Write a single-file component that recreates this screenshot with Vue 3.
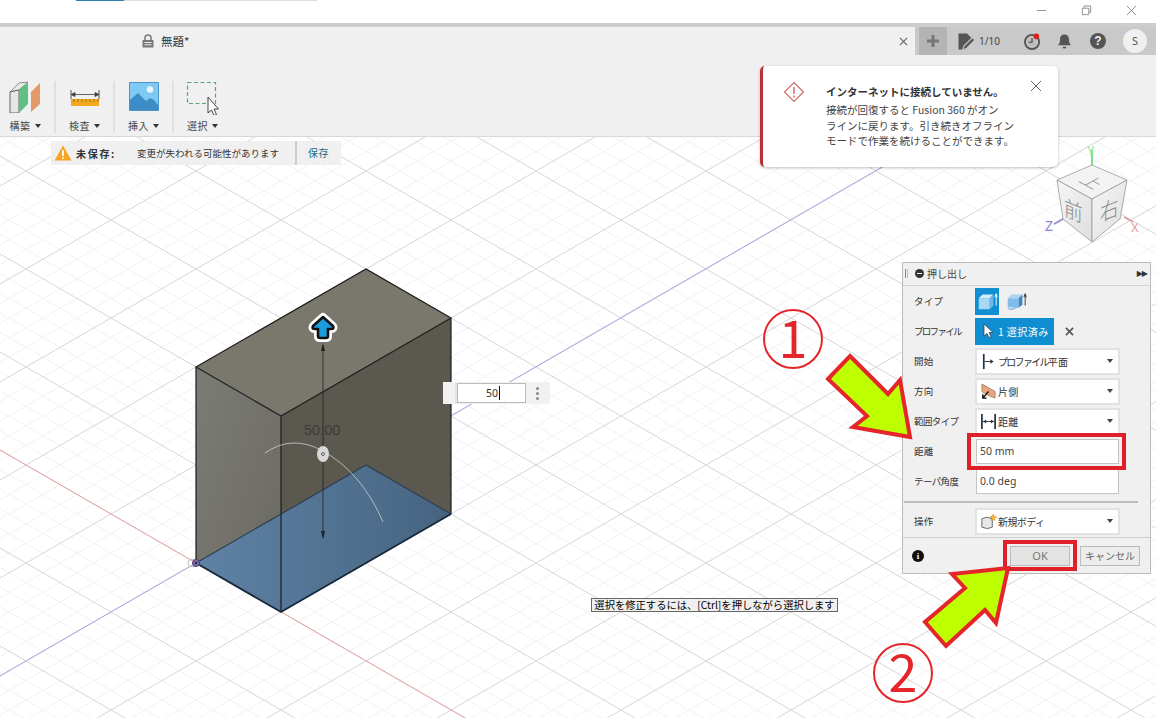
<script setup>
const S = 98 / 170
const OX = 196
const OY = 563

function family(sign) {
  const out = []
  for (let k = -90; k <= 90; k++) {
    const off = k * 19.6
    out.push({
      id: sign + '_' + k,
      major: k % 5 === 0,
      x1: 0,
      y1: OY + sign * S * (0 - OX) + off,
      x2: 1156,
      y2: OY + sign * S * (1156 - OX) + off
    })
  }
  return out
}
const lines = [...family(1), ...family(-1)]
const minorLines = lines.filter(l => !l.major)
const majorLines = lines.filter(l => l.major)

const toolGroups = [
  { id: 'build', label: '構築' },
  { id: 'inspect', label: '検査' },
  { id: 'insert', label: '挿入' },
  { id: 'select', label: '選択' }
]
</script>

<template>
  <div class="app">
    <div class="titlebar">
      <div class="sliver"><span class="sliver-blue"></span><span class="sliver-gray"></span></div>
      <div class="win-controls">
        <svg class="win-ic" viewBox="0 0 12 12"><path d="M1 6h10" stroke="#888" fill="none" /></svg>
        <svg class="win-ic" viewBox="0 0 12 12"><path d="M3.500 3V1h7v7H8.500M1.500 3.500h7v7h-7z" stroke="#888" fill="none" /></svg>
        <svg class="win-ic" viewBox="0 0 12 12"><path d="M1 1l10 10M11 1L1 11" stroke="#888" fill="none" /></svg>
      </div>
    </div>

    <div class="tabbar">
      <div class="tab">
        <svg class="lock" viewBox="0 0 12 14"><path d="M3 6V4a3 3 0 0 1 6 0v2" stroke="#777" stroke-width="1.500" fill="none" /><path d="M0.500 6h11v7.500h-11z" fill="#777" /><path d="M2.500 8.500h7M2.500 10.800h7" stroke="#f0f0f0" /></svg>
        <span class="tab-title">無題*</span>
        <svg class="tab-close" viewBox="0 0 10 10"><path d="M1 1l8 8M9 1l-8 8" stroke="#666" stroke-width="1.300" /></svg>
      </div>
      <div class="plus"><svg viewBox="0 0 14 14" class="plus-ic"><path d="M7 1v12M1 7h12" stroke="#777" stroke-width="3" /></svg></div>
      <div class="tab-tools">
        <svg class="doc-ic" viewBox="0 0 18 17"><path d="M0.500 0.500h8.500l4.500 4.500v5l-6.500 6.500h-6.500z" fill="#555" /><path d="M6 13l8.500-8.500 2.500 2.500-8.500 8.500-3.500 1z" fill="#555" stroke="#c9c9c9" stroke-width="1.100" /></svg>
        <span class="count">1/10</span>
        <svg class="clock-ic" viewBox="0 0 18 18"><circle cx="8.500" cy="9.500" r="7.500" fill="none" stroke="#555" stroke-width="2" /><circle cx="8.500" cy="9.500" r="4.800" fill="#bbb" /><path d="M8.500 5.500v4.300H4.800" fill="none" stroke="#444" stroke-width="1.200" /><circle cx="13" cy="3.500" r="3" fill="#dd2020" /></svg>
        <svg class="bell-ic" viewBox="0 0 16 18"><path d="M8 1.500c3.200 0 4.800 2.400 4.800 5.500 0 3.200 1 4.500 2.200 6H1c1.200-1.500 2.200-2.800 2.200-6C3.200 3.900 4.800 1.500 8 1.500z" fill="#555" /><path d="M6 14.500h4a2 2 0 0 1-4 0z" fill="#555" /></svg>
        <div class="help">?</div>
        <div class="avatar">S</div>
      </div>
    </div>

    <div class="toolbar">
      <div v-for="g in toolGroups" :key="g.id" class="tool-group" :class="'tg-' + g.id">
        <svg v-if="g.id === 'build'" class="tool-ic" viewBox="0 0 32 32">
          <path d="M1 11l9-9 9-1-9 8z" fill="#e8e8e8" stroke="#777" stroke-width=".8" />
          <path d="M1 11l9-2v23H1z" fill="#e6e6e6" stroke="#666" />
          <path d="M10 9l9-8v22l-9 9z" fill="#5fc084" />
          <path d="M22 31V11l9-9v21z" fill="#e3996a" />
        </svg>
        <svg v-else-if="g.id === 'inspect'" class="tool-ic" viewBox="0 0 32 32">
          <path d="M2 9v9M30 9v9" stroke="#555" fill="none" />
          <path d="M2 13.500h28M2 13.500l4-2v4zM30 13.500l-4-2v4z" stroke="#444" fill="#444" stroke-width=".8" />
          <path d="M2 18h28v7H2z" fill="#f2a91f" />
          <path d="M5 18v3M9 18v3M13 18v3M17 18v3M21 18v3M25 18v3M29 18v3" stroke="#a3701a" />
        </svg>
        <svg v-else-if="g.id === 'insert'" class="tool-ic" viewBox="0 0 32 32">
          <path d="M1.500 1.500h29v28h-29z" fill="#7fc9f5" stroke="#4b94c8" />
          <circle cx="22" cy="8.500" r="3.200" fill="#eaf6fd" />
          <path d="M2 29V19l8-7 8 8 4-3 4 2 4 5v5z" fill="#3c8dc7" />
        </svg>
        <svg v-else class="tool-ic sel-ic" viewBox="0 0 34 34">
          <path d="M2.500 1.500h28v21h-28z" fill="none" stroke="#5aa678" stroke-width="1.200" stroke-dasharray="4 2.500" />
          <path d="M23 16v16l3.500-3 2.500 5.500 2.500-1-2.500-5.500h4.500z" fill="#fff" stroke="#444" />
        </svg>
        <div class="tool-label">{{ g.label }}<span class="caret"></span></div>
      </div>
    </div>

    <div class="canvas">
      <svg class="scene" viewBox="0 137 1156 581">
        <defs>
          <linearGradient id="leftFace" x1="0" y1="0" x2="1" y2="1">
            <stop offset="0" stop-color="#7c7c77" />
            <stop offset="1" stop-color="#6a6960" />
          </linearGradient>
          <linearGradient id="floorFace" x1="0" y1="0" x2="1" y2="0">
            <stop offset="0" stop-color="#5f82a5" />
            <stop offset="1" stop-color="#466480" />
          </linearGradient>
          <linearGradient id="cubeFace" x1="0" y1="0" x2="1" y2="1">
            <stop offset="0" stop-color="#f6f6f6" />
            <stop offset="1" stop-color="#dedede" />
          </linearGradient>
        </defs>
        <line v-for="l in minorLines" :key="l.id" :x1="l.x1" :y1="l.y1" :x2="l.x2" :y2="l.y2" stroke="#f2f2f2" stroke-width="1" />
        <line v-for="l in majorLines" :key="l.id" :x1="l.x1" :y1="l.y1" :x2="l.x2" :y2="l.y2" stroke="#d6d6d6" stroke-width="1" />
        <line x1="0" y1="450" x2="500" y2="738" stroke="#e6a3a3" stroke-width="1" />
        <line x1="0" y1="676" x2="1156" y2="9" stroke="#aaa8e2" stroke-width="1" />

        <polygon points="196,367 281,416 281,612 196,563" fill="url(#leftFace)" />
        <polygon points="281,416 451,318 451,514 281,612" fill="#5b584f" />
        <polygon points="196,367 366,269 451,318 281,416" fill="#7a776c" />
        <polygon points="196,563 366,465 451,514 281,612" fill="url(#floorFace)" />
        <path d="M196 563L366 465L451 514" fill="none" stroke="#2c3f52" stroke-width="1.200" />
        <path d="M196 367L366 269L451 318L281 416L196 367V563M451 318V514M281 416V612" fill="none" stroke="#1c1c1c" stroke-width="1.200" />
        <path d="M196 563L281 612L451 514" fill="none" stroke="#16283a" stroke-width="1.800" />
        <circle cx="192" cy="563" r="4" fill="none" stroke="#bbb" />
        <circle cx="196" cy="563" r="3.500" fill="#7a6ea8" stroke="#4a3a70" />
        <circle cx="196" cy="563" r="1" fill="#111" />

        <path d="M323 345V538" stroke="#222" stroke-width=".8" />
        <path d="M323 343l-2 8h4zM323 539l-2-8h4z" fill="#222" />
        <path d="M265 453Q292 434 323 451Q362 473 383 522" fill="none" stroke="#d4d4d4" stroke-opacity=".75" stroke-width="1" />
        <ellipse cx="323" cy="454" rx="6" ry="8" fill="#d8d8d8" />
        <circle cx="323" cy="454" r="1.500" fill="none" stroke="#666" />
        <text x="304" y="435" class="dim">50.00</text>
        <path class="arrow-halo" d="M323 317L333 326Q334.500 329 331 329H328V336Q328 338 326 338H320Q318 338 318 336V329H315Q311.500 329 313 326Z" />
        <path class="arrow-core" d="M323 317L333 326Q334.500 329 331 329H328V336Q328 338 326 338H320Q318 338 318 336V329H315Q311.500 329 313 326Z" />

        <!-- view cube -->
        <path d="M1092 165V150" stroke="#7ee08c" stroke-width="2" />
        <text x="1087" y="155" class="axis ax-y">Y</text>
        <path d="M1063 219l-9 5" stroke="#8b88d8" stroke-width="1.500" />
        <text x="1045" y="231" class="axis ax-z">Z</text>
        <path d="M1124 217l9 5" stroke="#ea9a9a" stroke-width="1.500" />
        <text x="1131" y="232" class="axis ax-x">X</text>
        <polygon points="1092,165 1127,180 1092,199 1057,180" fill="#f3f3f3" stroke="#999" stroke-width=".8" />
        <polygon points="1057,180 1092,199 1092,242 1063,219" fill="url(#cubeFace)" stroke="#999" stroke-width=".8" />
        <polygon points="1127,180 1092,199 1092,242 1120,219" fill="url(#cubeFace)" stroke="#999" stroke-width=".8" />
        <text class="cube-t" transform="matrix(.72 .4 -.72 .4 1078 181)" x="0" y="0">上</text>
        <text class="cube-t" transform="matrix(.85 .35 0 1 1064 215)" x="0" y="0">前</text>
        <text class="cube-t" transform="matrix(.85 -.35 0 1 1100 222)" x="0" y="0">右</text>
      </svg>

      <div class="unsaved">
        <svg class="warn" viewBox="0 0 18 16"><path d="M9 0.500L17.500 15.500H0.500z" fill="#f5a623" /><path d="M9 5v6M9 12.300v1.500" stroke="#fff" stroke-width="1.800" /></svg>
        <b class="unsaved-b">未保存:</b>
        <span class="unsaved-msg">変更が失われる可能性があります</span>
        <span class="unsaved-save">保存</span>
      </div>

      <div class="num-box">
        <span class="grip"></span>
        <div class="num-input">50<span class="text-cursor"></span></div>
        <span class="dots"><i></i><i></i><i></i></span>
      </div>

      <div class="hint">選択を修正するには、[Ctrl]を押しながら選択します</div>

      <div class="dialog">
        <div class="dlg-head">
          <span class="dlg-grip"></span>
          <span class="minus"></span>
          <span class="dlg-title">押し出し</span>
          <span class="ff">▶▶</span>
        </div>
        <div class="row">
          <label class="lbl">タイプ</label>
          <div class="type-btn on">
            <svg viewBox="0 0 24 24" class="type-ic"><path d="M3 9h12v12H3z" fill="#a9d8f5" /><path d="M3 9l4-4h12l-4 4z" fill="#d2ecfb" /><path d="M15 9l4-4v12l-4 4z" fill="#6cb8e8" /><path d="M22 17V5M20.700 8L22 4l1.300 4" stroke="#fff" fill="none" /></svg>
          </div>
          <div class="type-btn">
            <svg viewBox="0 0 24 24" class="type-ic"><path d="M3 9h12v10H3z" fill="#7fbce8" /><path d="M3 9l4-4h12l-4 4z" fill="#a9d3f0" /><path d="M15 9l4-4v11l-4 3z" fill="#3f86c0" /><path d="M3 20q4 2 7 0t5-1" fill="none" stroke="#8ab8dc" stroke-width="1.500" /><path d="M22 17V5M20.700 8L22 4l1.300 4" stroke="#333" fill="none" /></svg>
          </div>
        </div>
        <div class="row">
          <label class="lbl kana">プロファイル</label>
          <div class="sel-btn">
            <svg viewBox="0 0 12 16" class="cur-ic"><path d="M2 1v12l3-2.500 2 4 2-1-2-4h4z" fill="#fff" stroke="#334" stroke-width=".7" /></svg>
            <span>1 選択済み</span>
          </div>
          <svg class="x-ic" viewBox="0 0 10 10"><path d="M1 1l8 8M9 1l-8 8" stroke="#555" stroke-width="1.800" /></svg>
        </div>
        <div class="row">
          <label class="lbl">開始</label>
          <div class="dd">
            <svg viewBox="0 0 18 18" class="dd-ic"><path d="M4 1v16" stroke="#1e3348" stroke-width="1.800" /><path d="M5 9h7" stroke="#333" /><path d="M11 6.500L14.500 9 11 11.500z" fill="#333" /></svg>
            <span><span class="kana">プロファイル</span>平面</span><span class="dd-caret"></span>
          </div>
        </div>
        <div class="row">
          <label class="lbl">方向</label>
          <div class="dd">
            <svg viewBox="0 0 18 18" class="dd-ic"><path d="M2 1l14 8v7L8 13 2 9z" fill="#eba57c" stroke="#8a6a50" stroke-width=".7" /><path d="M9 9l-6 7M3 12v4h4" stroke="#111" stroke-width="1.500" fill="none" /></svg>
            <span>片側</span><span class="dd-caret"></span>
          </div>
        </div>
        <div class="row">
          <label class="lbl semi">範囲タイプ</label>
          <div class="dd">
            <svg viewBox="0 0 18 18" class="dd-ic"><path d="M2 1v16M16 1v16" stroke="#1e3348" stroke-width="1.800" /><path d="M3 9h12" stroke="#333" /><path d="M3.500 9l3-2.200v4.400zM14.500 9l-3-2.200v4.400z" fill="#333" /></svg>
            <span>距離</span><span class="dd-caret"></span>
          </div>
        </div>
        <div class="row">
          <label class="lbl">距離</label>
          <div class="inp">50 mm</div>
        </div>
        <div class="row">
          <label class="lbl semi">テーパ角度</label>
          <div class="inp">0.0 deg</div>
        </div>
        <div class="sep"></div>
        <div class="row">
          <label class="lbl">操作</label>
          <div class="dd">
            <svg viewBox="0 0 18 18" class="dd-ic"><path d="M2 6q5-3 11 0v9q-5 3-11 0z" fill="#e8e8e8" stroke="#666" /><path d="M14 1l1 2.500 2.500.5-2 1.500.5 2.500-2-1.300-2 1.300.5-2.500-2-1.500 2.500-.5z" fill="#f5b642" stroke="#c9801a" stroke-width=".5" /></svg>
            <span class="semi">新規ボディ</span><span class="dd-caret"></span>
          </div>
        </div>
        <div class="foot">
          <span class="info">i</span>
          <button class="btn dis">OK</button>
          <button class="btn cancel">キャンセル</button>
        </div>
      </div>

      <svg class="marks" viewBox="0 137 1156 581">
        <rect x="969" y="435" width="155" height="33" class="mark-rect" />
        <rect x="1005" y="542" width="70" height="27" class="mark-rect" />
        <polygon points="850,356 888,394 900,380 910,437 853,427 867,416 828,379" class="mark-arrow" />
        <polygon points="1008,568 996,623 985,610 946,646 925,622 965,588 952,574" class="mark-arrow" />
        <circle cx="793" cy="339" r="29" class="mark-circle" />
        <text x="793" y="358" class="mark-num">1</text>
        <circle cx="903" cy="673" r="29" class="mark-circle" />
        <text x="903" y="692" class="mark-num">2</text>
      </svg>
    </div>

    <div class="notice">
      <svg class="notice-ic" viewBox="0 0 22 22"><path d="M11 1.500L20.500 11 11 20.500 1.500 11z" fill="none" stroke="#cf6a6a" stroke-width="1.200" /><path d="M11 6v7M11 14.500v2" stroke="#cf6a6a" stroke-width="1.500" /></svg>
      <div class="notice-body">
        <div class="notice-title">インターネットに接続していません。</div>
        <div class="notice-text">接続が回復すると Fusion 360 がオン<br />ラインに戻ります。引き続きオフライン<br />モードで作業を続けることができます。</div>
      </div>
      <svg class="notice-close" viewBox="0 0 12 12"><path d="M1 1l10 10M11 1L1 11" stroke="#666" /></svg>
    </div>
  </div>
</template>

<style>
html, body { margin: 0; background: #fff; }
</style>

<style scoped>
.app {
  position: relative;
  width: 1156px;
  height: 718px;
  overflow: hidden;
  display: flex;
  flex-direction: column;
  background: #fff;
  font-family: "Noto Sans CJK JP", "Noto Sans", sans-serif;
  font-size: 10px;
  color: #333;
}
.titlebar { height: 23px; position: relative; display: flex; justify-content: flex-end; border-bottom: 4px solid #cdcdcd; flex: none; }
.sliver { position: absolute; top: 0; left: 76px; display: flex; height: 1px; }
.sliver-blue { width: 48px; background: #2f7fb0; }
.sliver-gray { width: 193px; background: #ddd; }
.win-controls { display: flex; align-items: center; gap: 34px; padding: 0 19px 3px 0; }
.win-ic { width: 11px; height: 11px; }
.tabbar { height: 28px; display: flex; flex: none; background: #c9c9c9; }
.tab { width: 915px; background: #f0f0f0; display: flex; align-items: center; padding-left: 142px; box-sizing: border-box; }
.lock { width: 12px; height: 14px; margin-right: 7px; }
.tab-title { font-size: 11.500px; color: #333; }
.tab-close { width: 9px; height: 9px; margin-left: auto; margin-right: 7px; }
.plus { width: 28px; margin-left: 4px; background: #b4b4b4; display: flex; align-items: center; justify-content: center; }
.plus-ic { width: 14px; height: 14px; }
.tab-tools { display: flex; align-items: center; flex: 1; padding-left: 11px; }
.doc-ic { width: 18px; height: 17px; }
.count { font-size: 10px; color: #444; margin-left: 3px; width: 34px; font-family: "Noto Sans", sans-serif; }
.clock-ic { width: 17px; height: 17px; margin-left: 11px; }
.bell-ic { width: 15px; height: 17px; margin-left: 16px; }
.help { width: 16px; height: 16px; margin-left: 18px; border-radius: 50%; background: #555; color: #eee; font: bold 12px/16px "Liberation Sans", sans-serif; text-align: center; }
.avatar { width: 24px; height: 24px; margin-left: 17px; border-radius: 50%; background: #f0f0f0; color: #555; font-size: 11px; line-height: 24px; text-align: center; font-family: "Noto Sans", sans-serif; }

.toolbar { height: 82px; flex: none; box-sizing: border-box; background: #f0f0f0; border-bottom: 1px solid #d8d8d8; display: flex; align-items: flex-start; padding-top: 26px; }
.tool-group { width: 59px; height: 52px; box-sizing: border-box; border-right: 2px solid #e0e0e0; display: flex; flex-direction: column; align-items: center; }
.tg-build { width: 56px; padding-right: 4px; }
.tg-select { border-right: none; }
.tool-ic { width: 32px; height: 32px; flex: none; }
.sel-ic { width: 34px; height: 34px; margin-bottom: -2px; margin-left: -4px; }
.tool-label { margin-top: 6px; font-size: 10px; line-height: 14px; letter-spacing: .5px; color: #444; display: flex; align-items: center; }
.tg-select .tool-label { margin-left: -2px; }
.caret { width: 0; height: 0; margin-left: 4px; border: 3px solid transparent; border-top: 4px solid #333; border-bottom: 0; }

.canvas { position: relative; flex: 1; overflow: hidden; background: #fff; }
.scene, .marks { position: absolute; left: 0; top: 0; width: 1156px; height: 581px; display: block; }
.marks { pointer-events: none; }
.dim { font: 14.500px "Liberation Sans", sans-serif; fill: #3d3c38; }
.arrow-halo { fill: none; stroke: #fff; stroke-width: 8; stroke-linejoin: round; }
.arrow-core { fill: #1b9cdc; stroke: #111; stroke-width: 2.600; stroke-linejoin: round; }
.axis { font: 13px "Noto Sans", sans-serif; }
.ax-y { fill: #8fe79b; }
.ax-z { font-size: 14px; fill: #8b88d8; }
.ax-x { fill: #ec9a9a; }
.cube-t { font-size: 22px; font-weight: 300; fill: #8a8a8a; font-family: "Noto Sans CJK JP", sans-serif; }

.unsaved { position: absolute; left: 51px; top: 4px; width: 290px; height: 24px; background: #f0f0f0; display: flex; align-items: center; box-sizing: border-box; padding-left: 3px; }
.warn { width: 18px; height: 16px; }
.unsaved-b { margin-left: 4px; width: 61px; font-size: 10px; letter-spacing: 1.700px; color: #333; }
.unsaved-msg { font-size: 9.500px; width: 158px; color: #333; flex: none; }
.unsaved-save { border-left: 2px solid #ccc; height: 24px; line-height: 24px; padding-left: 11px; color: #1a6a88; font-size: 10px; letter-spacing: .5px; }

.num-box { position: absolute; left: 443px; top: 245px; width: 107px; height: 22px; box-sizing: border-box; background: #f1f1f1; display: flex; align-items: center; }
.grip { width: 14px; height: 22px; box-sizing: border-box; border-right: 2px solid #e4e4e4; }
.num-input { width: 69px; height: 20px; box-sizing: border-box; background: #fff; border: 1px solid #bbb; font: 10.500px/18px "Noto Sans", sans-serif; color: #333; display: flex; justify-content: center; align-items: center; padding-left: 3px; }
.text-cursor { width: 1px; height: 14px; background: #111; margin-left: 1px; }
.dots { margin-left: 10px; display: flex; flex-direction: column; gap: 2px; }
.dots i { width: 3px; height: 3px; border-radius: 50%; background: #888; display: block; }

.hint { position: absolute; left: 591px; top: 461px; width: 247px; height: 14px; box-sizing: border-box; background: #f0f0f0; border: 1px solid #666; color: #000; font-size: 10.300px; line-height: 12px; text-align: center; white-space: nowrap; }

.dialog { position: absolute; right: 5px; top: 125px; width: 249px; height: 312px; box-sizing: border-box; background: #f0f0f0; border: 1px solid #bbb; display: flex; flex-direction: column; }
.dlg-head { height: 23px; flex: none; box-sizing: border-box; border-bottom: 1px solid #d2d2d2; display: flex; align-items: center; padding: 0 0 2px 2px; }
.dlg-grip { width: 3px; height: 9px; border-left: 1px solid #888; border-right: 1px solid #bbb; box-sizing: border-box; }
.minus { position: relative; width: 9px; height: 9px; border-radius: 50%; background: #333; margin-left: 7px; }
.minus::after { content: ""; position: absolute; left: 2px; right: 2px; top: 4px; height: 1px; background: #fff; }
.dlg-title { margin-left: 3px; font-size: 10px; color: #444; }
.ff { margin-left: auto; margin-right: 3px; font-size: 8px; color: #333; letter-spacing: -1px; font-family: "DejaVu Sans", sans-serif; }
.row { height: 30px; flex: none; display: flex; align-items: center; padding-left: 11px; }
.lbl { width: 61px; flex: none; font-size: 9.500px; letter-spacing: .3px; color: #333; white-space: nowrap; }
.lbl.kana, .kana { letter-spacing: -1.700px; }
.lbl.semi, .semi { letter-spacing: -.6px; }
.type-btn { width: 24px; height: 27px; display: flex; align-items: center; justify-content: center; margin-right: 5px; }
.type-btn.on { background: #0f8fd2; }
.type-ic { width: 22px; height: 22px; }
.sel-btn { width: 79px; height: 27px; background: #0f8fd2; color: #fff; display: flex; align-items: center; padding-left: 7px; box-sizing: border-box; font-size: 10px; letter-spacing: .5px; white-space: nowrap; }
.cur-ic { width: 12px; height: 16px; margin-right: 4px; flex: none; }
.x-ic { width: 9px; height: 9px; margin-left: 11px; }
.dd { width: 145px; height: 27px; box-sizing: border-box; background: #fff; border: 2px solid #e2e2e2; display: flex; align-items: center; padding-left: 3px; font-size: 10px; letter-spacing: .3px; color: #333; }
.dd-ic { width: 17px; height: 17px; margin-right: 1px; flex: none; }
.dd-caret { margin-left: auto; margin-right: 5px; width: 0; height: 0; border: 3px solid transparent; border-top: 4px solid #444; border-bottom: 0; }
.inp { width: 143px; height: 25px; margin-left: 1px; box-sizing: border-box; background: #fff; border: 1px solid #c4c4c4; padding-left: 3px; font: 10.500px/23px "Noto Sans", sans-serif; color: #444; }
.sep { height: 2px; flex: none; margin: 5px 12px 3px 1px; background: #bdbdbd; }
.foot { flex: 1; border-top: 1px solid #cfcfcf; margin-top: 1px; display: flex; align-items: center; padding: 0 10px 0 9px; }
.info { width: 12px; height: 12px; border-radius: 50%; background: #111; color: #fff; font: bold 9px/12px "Liberation Serif", serif; text-align: center; margin-right: auto; }
.btn { width: 60px; height: 20px; padding: 0; box-sizing: border-box; border: 1px solid #bbb; background: #e4e4e4; color: #777; font-family: "Noto Sans CJK JP", sans-serif; font-size: 10px; line-height: 18px; margin-left: 10px; }
.btn.dis { font-size: 11px; font-family: "Noto Sans", sans-serif; }
.btn.cancel { color: #666; background: #ececec; }

.mark-rect { fill: none; stroke: #df2029; stroke-width: 4; }
.mark-arrow { fill: #bdff00; stroke: #e5252a; stroke-width: 4; stroke-linejoin: miter; }
.mark-circle { fill: none; stroke: #e5252a; stroke-width: 2; }
.mark-num { font-family: "Noto Sans CJK JP", sans-serif; font-size: 52px; fill: #e5252a; text-anchor: middle; }

.notice { position: absolute; left: 760px; top: 66px; width: 298px; height: 101px; box-sizing: border-box; background: #fff; border-left: 3px solid #b9313a; border-radius: 5px; box-shadow: 0 1px 3px rgba(0,0,0,.25); display: flex; padding: 15px 0 0 20px; }
.notice-ic { width: 22px; height: 22px; flex: none; }
.notice-body { margin-left: 21px; padding-top: 4px; }
.notice-title { font-size: 10.500px; font-weight: 700; line-height: 14px; color: #333; white-space: nowrap; }
.notice-text { font-size: 10.500px; line-height: 15.500px; color: #444; margin-top: 3px; white-space: nowrap; }
.notice-close { position: absolute; right: 16px; top: 14px; width: 12px; height: 12px; }
</style>
